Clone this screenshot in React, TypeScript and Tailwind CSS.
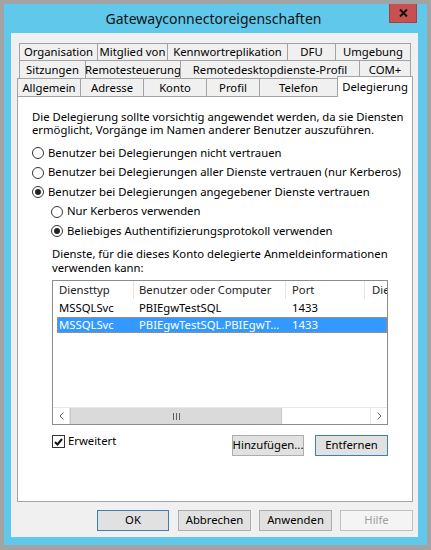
import React from "react";

// Windows 8 style "Gatewayconnectoreigenschaften" dialog (Delegierung tab)

const row1 = [
  { label: "Organisation", w: "w-[78px]" },
  { label: "Mitglied von", w: "w-[70px]" },
  { label: "Kennwortreplikation", w: "w-[120px]" },
  { label: "DFU", w: "w-[48px]" },
  { label: "Umgebung", w: "w-[76px]" },
];

const row2 = [
  { label: "Sitzungen", w: "w-[66px]" },
  { label: "Remotesteuerung", w: "w-[95px]" },
  { label: "Remotedesktopdienste-Profil", w: "w-[179px]" },
  { label: "COM+", w: "w-[52px]" },
];

const row3 = [
  { label: "Allgemein", w: "w-[63px]" },
  { label: "Adresse", w: "w-[63px]" },
  { label: "Konto", w: "w-[63px]" },
  { label: "Profil", w: "w-[53px]" },
  { label: "Telefon", w: "w-[78px]" },
];

function Tab({ label, w, last }: { label: string; w: string; last?: boolean }) {
  return (
    <div
      className={`${w} h-full flex items-center justify-center border-t border-l border-[#a3a3a3] bg-[#f0f0f0] whitespace-nowrap ${last ? "border-r" : ""}`}
    >
      {label}
    </div>
  );
}

function Radio({ checked, label }: { checked?: boolean; label: string }) {
  return (
    <div className="flex items-center gap-[4px] whitespace-nowrap">
      <span className="w-[12px] h-[12px] rounded-full border border-[#333] bg-white flex items-center justify-center">
        {checked && <span className="w-[6px] h-[6px] rounded-full bg-[#222]" />}
      </span>
      <span>{label}</span>
    </div>
  );
}

function Button({ label, w, focus, disabled }: { label: string; w: string; focus?: boolean; disabled?: boolean }) {
  const tone = disabled
    ? "bg-[#f4f4f4] border-[#bfbfbf] text-[#a0a0a0]"
    : focus
      ? "bg-[#e1e1e1] border-[#3c7fb1] text-black"
      : "bg-[#e1e1e1] border-[#adadad] text-black";
  return (
    <div className={`${w} h-[21px] border ${tone} flex items-center justify-center whitespace-nowrap`}>
      {label}
    </div>
  );
}

export default function App() {
  return (
    <div className="w-[431px] h-[550px] bg-[#a3a3a3] pt-[4px] pl-[4px] pr-[4px] pb-[5px] font-['Segoe_UI','Noto_Sans',sans-serif] text-[11.3px] text-black">
      <div className="w-[423px] h-[541px] bg-[#5fc8eb] flex flex-col pl-[7px] pr-[9px] pb-[8px]">
        {/* Title bar */}
        <div className="h-[29px] -ml-[7px] -mr-[9px] grid grid-cols-[1fr_auto_1fr]">
          <div />
          <div className="text-[14px] leading-[29px] text-[#111] pr-[4px]">Gatewayconnectoreigenschaften</div>
          <div className="flex justify-end pr-[10px]">
            <div className="w-[28px] h-[19px] bg-[#c75050] border-x border-b border-[#a84040] flex items-center justify-center">
              <svg width="9" height="8" viewBox="0 0 9 8">
                <path d="M1 0.5 L8 7.5 M8 0.5 L1 7.5" stroke="#111" strokeWidth="2" />
              </svg>
            </div>
          </div>
        </div>

        {/* Dialog body */}
        <div className="flex-1 bg-[#f0f0f0] pt-[10px] pl-[6px] pr-[5px] flex flex-col">
          <div className="flex h-[17px] ml-[2px] leading-none">
            {row1.map((t, i) => (
              <Tab key={t.label} label={t.label} w={t.w} last={i === row1.length - 1} />
            ))}
          </div>
          <div className="flex h-[18px] ml-[2px] leading-none">
            {row2.map((t, i) => (
              <Tab key={t.label} label={t.label} w={t.w} last={i === row2.length - 1} />
            ))}
          </div>
          <div className="flex h-[18px] items-end leading-none">
            {row3.map((t) => (
              <Tab key={t.label} label={t.label} w={t.w} />
            ))}
            <div className="relative z-10 w-[76px] h-[21px] -mb-px bg-white border-t border-x border-[#a3a3a3] flex items-start justify-center pt-[4px] whitespace-nowrap">
              Delegierung
            </div>
          </div>

          {/* Tab page */}
          <div className="h-[406px] bg-white border border-[#a3a3a3] pt-[13px] pl-[14px] flex flex-col">
            <p className="leading-[13px] whitespace-nowrap">
              Die Delegierung sollte vorsichtig angewendet werden, da sie Diensten
              <br />
              ermöglicht, Vorgänge im Namen anderer Benutzer auszuführen.
            </p>

            <div className="mt-[7px] flex flex-col">
              <div className="h-[20px] flex items-center">
                <Radio label="Benutzer bei Delegierungen nicht vertrauen" />
              </div>
              <div className="h-[19px] flex items-center">
                <Radio label="Benutzer bei Delegierungen aller Dienste vertrauen (nur Kerberos)" />
              </div>
              <div className="h-[20px] flex items-center">
                <Radio checked label="Benutzer bei Delegierungen angegebener Dienste vertrauen" />
              </div>
              <div className="h-[19px] flex items-center ml-[19px]">
                <Radio label="Nur Kerberos verwenden" />
              </div>
              <div className="h-[20px] flex items-center ml-[19px]">
                <Radio checked label="Beliebiges Authentifizierungsprotokoll verwenden" />
              </div>
            </div>

            <div className="ml-[20px] w-[336px] flex flex-col">
              <p className="mt-[6px] leading-[14px] whitespace-nowrap">
                Dienste, für die dieses Konto delegierte Anmeldeinformationen
                <br />
                verwenden kann:
              </p>

              {/* Services list */}
              <div className="mt-[5px] h-[145px] border border-[#8c8c8c] flex flex-col overflow-hidden">
                <div className="h-[18px] flex items-center text-[#222] whitespace-nowrap">
                  <div className="w-[81px] h-full flex items-center pl-[6px] border-r border-[#e5e5e5]">Diensttyp</div>
                  <div className="w-[152px] h-full flex items-center pl-[5px] border-r border-[#e5e5e5]">Benutzer oder Computer</div>
                  <div className="w-[79px] h-full flex items-center pl-[6px] border-r border-[#e5e5e5]">Port</div>
                  <div className="flex-1 h-full flex items-center pl-[7px] overflow-hidden">Die</div>
                </div>
                <div className="h-[18px] flex items-center whitespace-nowrap">
                  <div className="w-[81px] pl-[6px]">MSSQLSvc</div>
                  <div className="w-[152px] pl-[5px]">PBIEgwTestSQL</div>
                  <div className="w-[79px] pl-[6px]">1433</div>
                </div>
                <div className="h-[16px] ml-[4px] flex items-center whitespace-nowrap bg-[#3399ff] text-white outline outline-1 outline-dotted outline-[#e08b2a] -outline-offset-1">
                  <div className="w-[77px] pl-[2px]">MSSQLSvc</div>
                  <div className="w-[152px] pl-[5px]">PBIEgwTestSQL.PBIEgwT...</div>
                  <div className="w-[79px] pl-[6px]">1433</div>
                </div>
                <div className="flex-1" />

                {/* Horizontal scrollbar */}
                <div className="h-[17px] flex bg-white border-t border-[#e6e6e6]">
                  <div className="w-[17px] h-full flex items-center justify-center border-r border-[#e6e6e6]">
                    <svg width="5" height="8" viewBox="0 0 5 8">
                      <path d="M4.5 0.5 L1 4 L4.5 7.5" stroke="#606060" fill="none" />
                    </svg>
                  </div>
                  <div className="w-[212px] h-full bg-[#dadada] border-x border-[#c8c8c8] flex items-center justify-center">
                    <svg width="7" height="7" viewBox="0 0 7 7">
                      <path d="M0.5 0 V7 M3.5 0 V7 M6.5 0 V7" stroke="#606060" />
                    </svg>
                  </div>
                  <div className="flex-1" />
                  <div className="w-[17px] h-full flex items-center justify-center border-l border-[#e6e6e6]">
                    <svg width="5" height="8" viewBox="0 0 5 8">
                      <path d="M0.5 0.5 L4 4 L0.5 7.5" stroke="#606060" fill="none" />
                    </svg>
                  </div>
                </div>
              </div>

              <div className="mt-[10px] flex items-start">
                <div className="flex items-center gap-[3px] h-[13px] whitespace-nowrap">
                  <span className="w-[13px] h-[13px] border border-[#333] bg-white flex items-center justify-center">
                    <svg width="9" height="8" viewBox="0 0 9 8">
                      <path d="M1 4 L3.5 6.5 L8 1" stroke="#111" strokeWidth="2" fill="none" />
                    </svg>
                  </span>
                  <span>Erweitert</span>
                </div>
                <div className="ml-auto flex gap-[11px]">
                  <Button label="Hinzufügen..." w="w-[72px]" />
                  <Button label="Entfernen" w="w-[73px]" focus />
                </div>
              </div>
            </div>
          </div>

          {/* Dialog buttons */}
          <div className="mt-[8px] flex justify-end">
            <Button label="OK" w="w-[72px]" focus />
            <div className="ml-[9px]">
              <Button label="Abbrechen" w="w-[73px]" />
            </div>
            <div className="ml-[8px]">
              <Button label="Anwenden" w="w-[73px]" />
            </div>
            <div className="ml-[8px]">
              <Button label="Hilfe" w="w-[73px]" disabled />
            </div>
          </div>
        </div>
      </div>
    </div>
  );
}
